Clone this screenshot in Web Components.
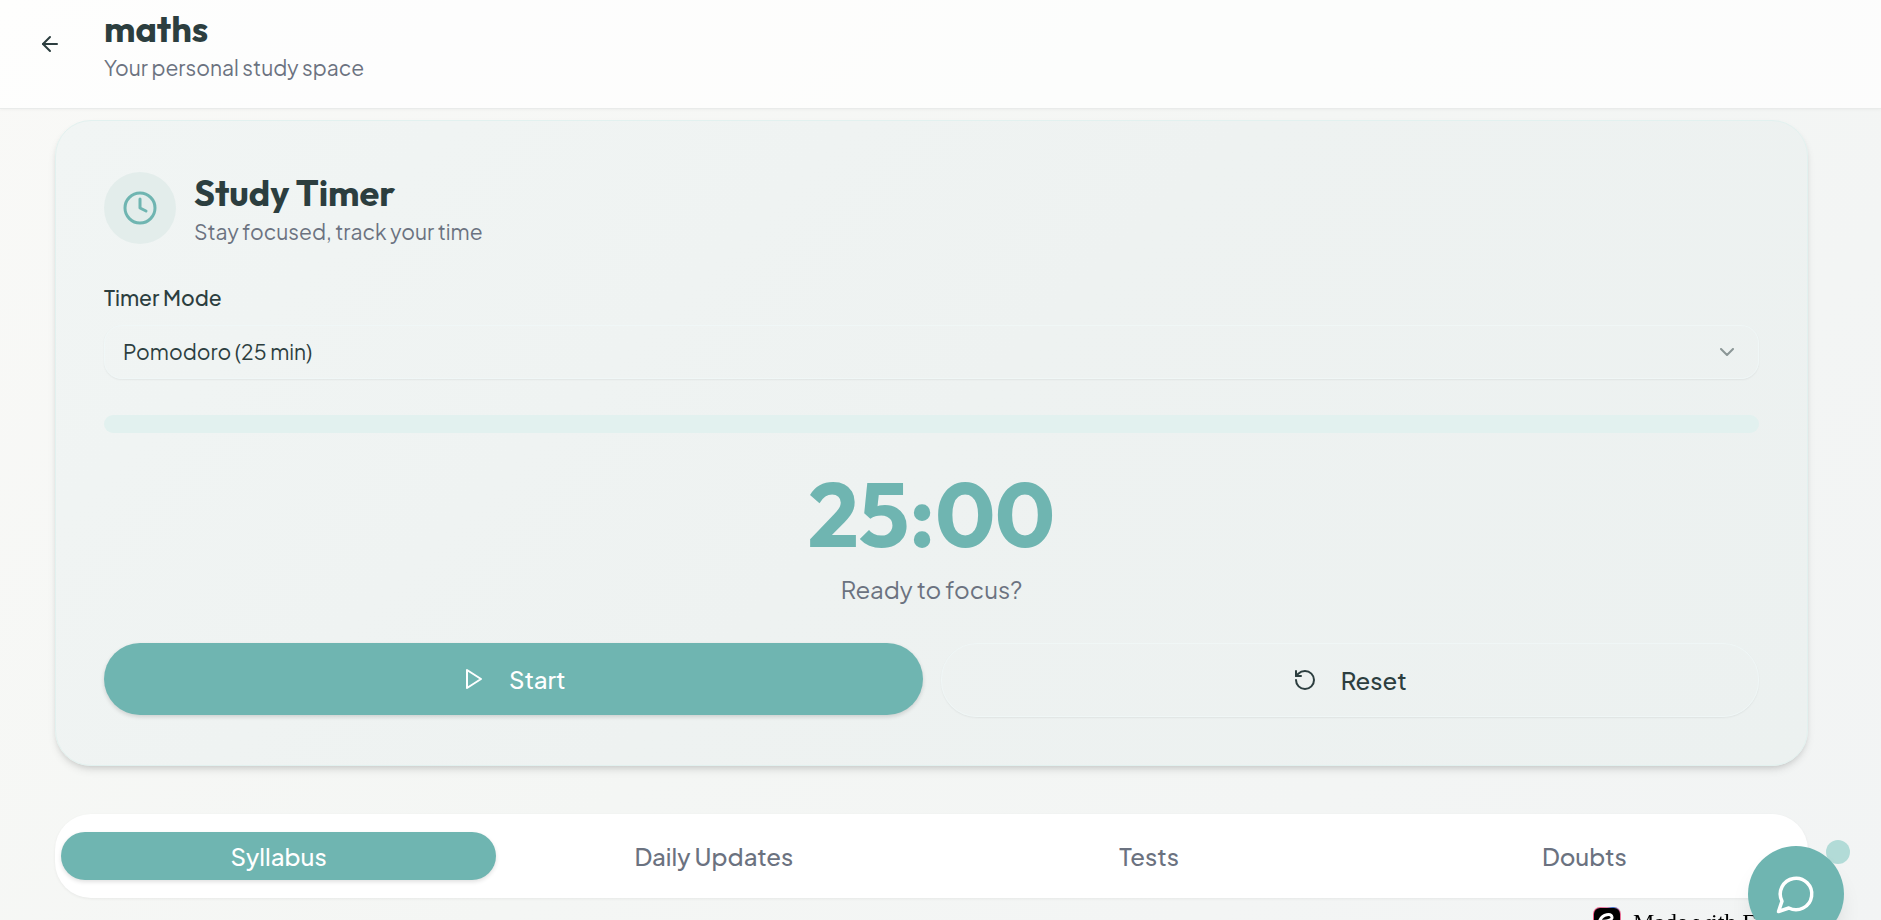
<!DOCTYPE html>
<html lang="en">
<head>
<meta charset="utf-8">
<title>maths</title>
<style>
  :root {
    --teal: #6fb5b1;
    --ink: #2c3e3f;
    --muted: #6b7280;
    --mint: #e2f1ef;
    --heading: Outfit, Lato, sans-serif;
    --body: "Plus Jakarta Sans", Inter, sans-serif;
  }
  * { box-sizing: border-box; }
  body {
    margin: 0;
    min-height: 100vh;
    overflow: hidden;
    color: var(--ink);
    background: linear-gradient(135deg, #f9f9f7 0%, #f4f6f4 50%, #f2f4f4 100%);
    font-family: var(--body);
    font-size: 24px;
    line-height: 36px;
  }
  main {
    display: flex;
    flex-direction: column;
    gap: 48px;
    padding: 11px 73px 48px 55px;
  }
</style>
</head>
<body>
<page-header>
  <span slot="title">maths</span>
  <span slot="subtitle">Your personal study space</span>
</page-header>
<main>
  <study-timer></study-timer>
  <tab-bar tabs="Syllabus,Daily Updates,Tests,Doubts" active="Syllabus"></tab-bar>
</main>
<made-with>Made with E</made-with>
<chat-button></chat-button>

<script>
const ICONS = {
  back: '<path d="m12 19-7-7 7-7"/><path d="M19 12H5"/>',
  clock: '<circle cx="12" cy="12" r="10"/><path d="M12 6v6l4 2"/>',
  chevron: '<path d="m6 9 6 6 6-6"/>',
  play: '<path d="M6 3l14 9-14 9z"/>',
  reset: '<path d="M3 12a9 9 0 1 0 9-9 9.75 9.75 0 0 0-6.74 2.74L3 8"/><path d="M3 3v5h5"/>',
  chat: '<path d="M7.9 20A9 9 0 1 0 4 16.1L2 22Z"/>',
};

class UiIcon extends HTMLElement {
  static get observedAttributes() {
    return ["name", "size"];
  }

  constructor() {
    super();
    this.attachShadow({ mode: "open" });
  }

  attributeChangedCallback() {
    const size = this.getAttribute("size") || 24;
    this.shadowRoot.innerHTML = `
      <style>
      :host { display: inline-flex; flex: none; }
      svg { display: block; }
      </style>
      <svg width="${size}" height="${size}" viewBox="0 0 24 24" fill="none" stroke="currentColor"
        stroke-width="2" stroke-linecap="round" stroke-linejoin="round" aria-hidden="true">
        ${ICONS[this.getAttribute("name")] || ""}
      </svg>
    `;
  }
}
customElements.define("ui-icon", UiIcon);

class PageHeader extends HTMLElement {
  constructor() {
    super();
    this.attachShadow({ mode: "open" });
    this.shadowRoot.innerHTML = `
      <style>
      :host {
        display: block;
        background: rgba(255, 255, 255, 0.72);
        border-bottom: 1px solid #e9ebea;
        box-shadow: 0 1px 3px rgba(0, 0, 0, 0.04);
      }
      header {
        display: flex;
        align-items: center;
        gap: 23px;
        padding: 5px 73px 25px 19px;
      }
      button {
        display: flex;
        padding: 19px;
        border: 0;
        background: none;
        color: inherit;
      }
      h1 {
        margin: 0;
        font: 700 36px/47px var(--heading);
      }
      p {
        margin: 0;
        color: var(--muted);
        font-size: 21px;
        line-height: 31px;
      }
      </style>
      <header>
        <button aria-label="Back"><ui-icon name="back"></ui-icon></button>
        <div>
          <h1><slot name="title"></slot></h1>
          <p><slot name="subtitle"></slot></p>
        </div>
      </header>
    `;
  }
}
customElements.define("page-header", PageHeader);

class PillButton extends HTMLElement {
  constructor() {
    super();
    this.attachShadow({ mode: "open" });
    this.shadowRoot.innerHTML = `
      <style>
      :host { display: block; flex: 1; }
      button {
        display: flex;
        align-items: center;
        justify-content: center;
        gap: 24px;
        box-sizing: border-box;
        width: 100%;
        height: 72px;
        border: 0;
        border-radius: 36px;
        background: var(--teal);
        color: #fff;
        font: 500 24px/36px var(--body);
        box-shadow: 0 2px 4px rgba(0, 0, 0, 0.14);
      }
      :host([outline]) button {
        height: 74px;
        border: 1px solid rgba(240, 247, 248, 0.8);
        background: none;
        color: var(--ink);
        box-shadow: 0 1px 2px rgba(0, 0, 0, 0.06);
      }
      </style>
      <button><ui-icon name="${this.getAttribute("icon")}"></ui-icon><slot></slot></button>
    `;
  }
}

class StudyTimer extends HTMLElement {
  #clock;
  #progress;
  #select;
  #left = 25 * 60;
  #timer = null;

  constructor() {
    super();
    this.attachShadow({ mode: "open" });
    this.shadowRoot.innerHTML = `
      <style>
      :host {
        display: flex;
        flex-direction: column;
        gap: 36px;
        padding: 48px;
        border: 1px solid var(--mint);
        border-radius: 36px;
        background: linear-gradient(135deg, #f1f5f4, #eef2f1 50%, #ecf1f0);
        box-shadow: 0 5px 9px -1px rgba(0, 0, 0, 0.1), 0 3px 6px -3px rgba(0, 0, 0, 0.14);
      }
      .head {
        display: flex;
        align-items: center;
        gap: 18px;
      }
      .badge {
        display: flex;
        padding: 18px;
        border-radius: 50%;
        background: #e3edeb;
        color: var(--teal);
      }
      h2 {
        margin: 0;
        font: 700 36px/47px var(--heading);
      }
      p { margin: 0; color: var(--muted); }
      .head p { font-size: 21px; line-height: 31px; }
      .field {
        display: flex;
        flex-direction: column;
        gap: 12px;
      }
      label {
        font-size: 21px;
        font-weight: 500;
        line-height: 30px;
      }
      .select {
        display: grid;
        align-items: center;
      }
      .select > * { grid-area: 1 / 1; }
      .select ui-icon {
        justify-self: end;
        margin-right: 20px;
        opacity: 0.5;
        pointer-events: none;
      }
      select {
        appearance: none;
        width: 100%;
        height: 54px;
        padding: 0 18px;
        border: 1px solid rgba(240, 247, 248, 0.8);
        border-radius: 18px;
        background: none;
        color: inherit;
        font: 400 21px/30px var(--body);
        box-shadow: 0 1px 2px rgba(0, 0, 0, 0.06);
      }
      progress {
        appearance: none;
        display: block;
        width: 100%;
        height: 18px;
        border: 0;
        border-radius: 9px;
        overflow: hidden;
        background: var(--mint);
      }
      progress::-webkit-progress-bar { background: var(--mint); }
      progress::-webkit-progress-value { background: var(--teal); }
      .readout {
        display: flex;
        flex-direction: column;
        gap: 12px;
        text-align: center;
      }
      .time {
        color: var(--teal);
        font: 700 90px/90px var(--heading);
      }
      .actions {
        display: flex;
        align-items: flex-start;
        gap: 18px;
      }
      </style>
      <div class="head">
        <div class="badge"><ui-icon name="clock" size="36"></ui-icon></div>
        <div>
          <h2>Study Timer</h2>
          <p>Stay focused, track your time</p>
        </div>
      </div>
      <div class="field">
        <label for="mode">Timer Mode</label>
        <div class="select">
          <select id="mode">
            <option value="25">Pomodoro (25 min)</option>
          </select>
          <ui-icon name="chevron"></ui-icon>
        </div>
      </div>
      <progress max="100" value="0" aria-label="Progress"></progress>
      <div class="readout">
        <div class="time">25:00</div>
        <p>Ready to focus?</p>
      </div>
      <div class="actions">
        <pill-button id="start" icon="play">Start</pill-button>
        <pill-button id="reset" icon="reset" outline>Reset</pill-button>
      </div>
    `;

    this.#clock = this.shadowRoot.querySelector(".time");
    this.#progress = this.shadowRoot.querySelector("progress");
    this.#select = this.shadowRoot.querySelector("select");

    this.shadowRoot.querySelector("#start").addEventListener("click", () => this.toggle());
    this.shadowRoot.querySelector("#reset").addEventListener("click", () => this.reset());
    this.#select.addEventListener("change", () => this.reset());
  }

  get total() {
    return Number(this.#select.value) * 60;
  }

  toggle() {
    if (this.#timer) this.stop();
    else this.#timer = setInterval(() => this.tick(), 1000);
  }

  stop() {
    clearInterval(this.#timer);
    this.#timer = null;
  }

  reset() {
    this.stop();
    this.#left = this.total;
    this.update();
  }

  tick() {
    this.#left = Math.max(0, this.#left - 1);
    if (this.#left === 0) this.stop();
    this.update();
  }

  update() {
    const min = String(Math.floor(this.#left / 60)).padStart(2, "0");
    const sec = String(this.#left % 60).padStart(2, "0");
    this.#clock.textContent = `${min}:${sec}`;
    this.#progress.value = 100 - (this.#left / this.total) * 100;
  }
}
customElements.define("study-timer", StudyTimer);
customElements.define("pill-button", PillButton);

class TabBar extends HTMLElement {
  static get observedAttributes() {
    return ["active"];
  }

  constructor() {
    super();
    this.attachShadow({ mode: "open" });
    this.shadowRoot.innerHTML = `
      <style>
      :host { display: block; }
      .list {
        display: flex;
        padding: 18px 6px;
        border-radius: 36px;
        background: #fff;
        box-shadow: 0 1px 3px rgba(0, 0, 0, 0.06);
      }
      button {
        flex: 1;
        height: 48px;
        padding: 0 18px;
        border: 0;
        border-radius: 24px;
        background: none;
        color: var(--muted);
        font: 500 24px/36px var(--body);
      }
      button[aria-selected="true"] {
        background: var(--teal);
        color: #fff;
        box-shadow: 0 2px 4px rgba(0, 0, 0, 0.12);
      }
      </style>
      <div class="list" role="tablist"></div>
    `;
    const list = this.shadowRoot.querySelector(".list");
    for (const name of this.getAttribute("tabs").split(",")) {
      const button = document.createElement("button");
      button.setAttribute("role", "tab");
      button.textContent = name;
      button.addEventListener("click", () => this.setAttribute("active", name));
      list.append(button);
    }
  }

  attributeChangedCallback(name, old, value) {
    for (const button of this.shadowRoot.querySelectorAll("button")) {
      button.setAttribute("aria-selected", String(button.textContent === value));
    }
  }
}
customElements.define("tab-bar", TabBar);

class MadeWith extends HTMLElement {
  constructor() {
    super();
    this.attachShadow({ mode: "open" });
    this.shadowRoot.innerHTML = `
      <style>
      :host {
        position: fixed;
        right: 24px;
        bottom: -17px;
        width: 264px;
      }
      a {
        display: flex;
        align-items: center;
        gap: 12px;
        color: #000;
        font: 24px/30px "Liberation Serif", serif;
        text-decoration: none;
        white-space: nowrap;
      }
      svg { flex: none; }
      </style>
      <a href="#">
        <svg width="28" height="30" viewBox="0 0 28 30" aria-hidden="true">
          <defs>
            <linearGradient id="edge">
              <stop offset="0" stop-color="#f0567f"/>
              <stop offset="0.5" stop-color="#e58ab0"/>
              <stop offset="0.7" stop-color="#3c7bd6"/>
              <stop offset="1" stop-color="#ef6f92"/>
            </linearGradient>
          </defs>
          <rect width="28" height="30" rx="7" fill="url(#edge)"/>
          <rect x="1" y="1" width="26" height="28" rx="6" fill="#000"/>
          <path d="M8 14c5 1 12-1 11-4-1-4-9-3-12 3-3 7 5 11 13 5" fill="none" stroke="#fff" stroke-width="3" stroke-linecap="round"/>
        </svg>
        <slot></slot>
      </a>
    `;
  }
}
customElements.define("made-with", MadeWith);

class ChatButton extends HTMLElement {
  constructor() {
    super();
    this.attachShadow({ mode: "open" });
    this.shadowRoot.innerHTML = `
      <style>
      :host {
        position: fixed;
        right: 37px;
        bottom: -22px;
        isolation: isolate;
      }
      button {
        display: flex;
        padding: 27px;
        border: 0;
        border-radius: 50%;
        background: var(--teal);
        color: #fff;
        box-shadow: 0 15px 22px -4px rgba(0, 0, 0, 0.1), 0 6px 9px -6px rgba(0, 0, 0, 0.1);
      }
      .ping {
        position: absolute;
        top: -6px;
        right: -6px;
        z-index: -1;
        width: 24px;
        height: 24px;
        border-radius: 50%;
        background: #b2dbd7;
      }
      </style>
      <button aria-label="Open chat"><ui-icon name="chat" size="42"></ui-icon></button>
      <span class="ping"></span>
    `;
  }
}
customElements.define("chat-button", ChatButton);
</script>
</body>
</html>
